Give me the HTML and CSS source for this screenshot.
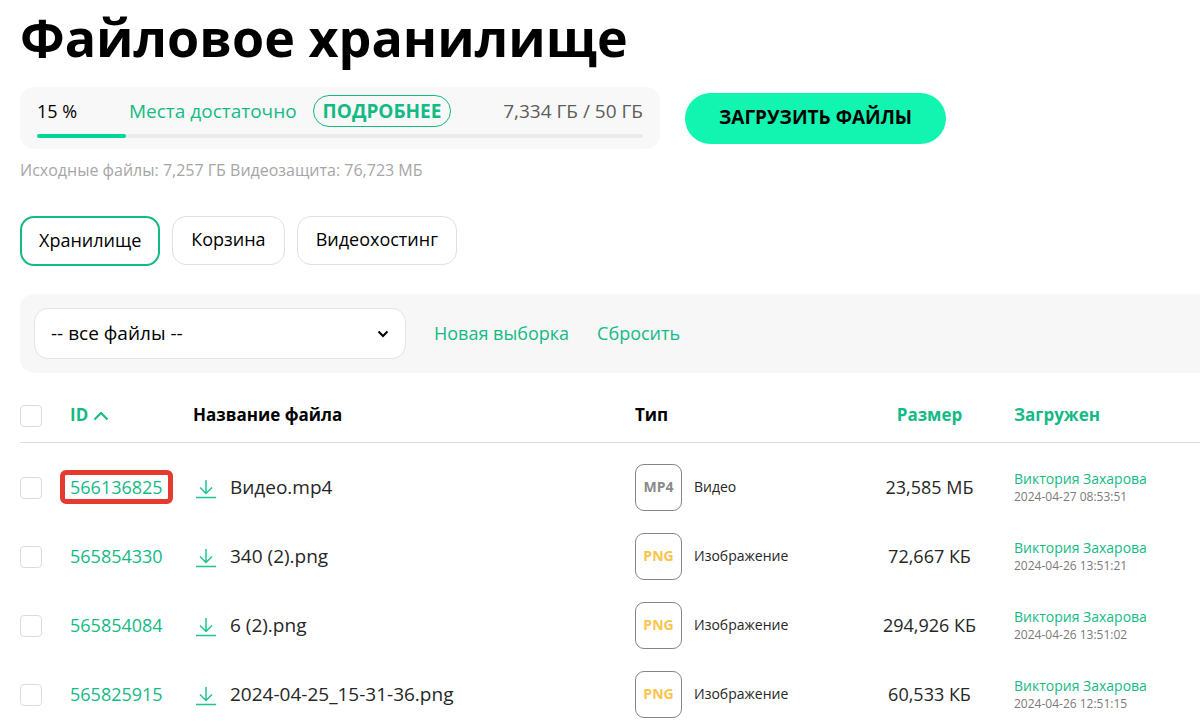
FILE: index.html
```html
<!DOCTYPE html>
<html lang="ru">
<head>
<meta charset="utf-8">
<meta name="viewport" content="width=device-width, initial-scale=1">
<title>Файловое хранилище</title>
<link rel="stylesheet" href="styles.css">
</head>
<body>
<svg class="sprite" aria-hidden="true">
  <symbol id="download" viewBox="0 0 20 20"><path d="M10 1v13M4 8.500l6 6 6-6M0 18.500h20"/></symbol>
</svg>
<main class="page">
  <h1 class="title">Файловое хранилище</h1>
  <section class="summary">
    <div class="quota">
      <div class="quota-line">
        <span class="quota-percent">15 %</span>
        <span class="quota-state">Места достаточно</span>
        <button class="more" type="button">ПОДРОБНЕЕ</button>
        <span class="quota-size">7,334 ГБ / 50 ГБ</span>
      </div>
      <div class="track"><div class="fill" style="width: 14.7%"></div></div>
    </div>
    <button class="upload" type="button">ЗАГРУЗИТЬ ФАЙЛЫ</button>
  </section>
  <p class="note">Исходные файлы: 7,257 ГБ Видеозащита: 76,723 МБ</p>
  <nav class="tabs">
    <a class="tab tab-active" href="#storage">Хранилище</a>
    <a class="tab" href="#trash">Корзина</a>
    <a class="tab" href="#video">Видеохостинг</a>
  </nav>
  <section class="filter">
    <div class="select-box">
      <select class="select" aria-label="Выборка файлов"><option>-- все файлы --</option></select>
      <svg class="chevron" viewBox="0 0 12 8" aria-hidden="true"><path d="M1.500 1.500L6 6l4.500-4.500"/></svg>
    </div>
    <a class="link" href="#new">Новая выборка</a>
    <a class="link" href="#reset">Сбросить</a>
  </section>
  <table class="files">
    <colgroup><col class="col-check"><col class="col-id"><col><col class="col-type"><col class="col-size"><col class="col-user"></colgroup>
    <thead>
      <tr>
        <th><input class="check" type="checkbox" aria-label="Выбрать все"></th>
        <th><a class="sort" href="#id">ID <svg class="caret" viewBox="0 0 16 10" aria-hidden="true"><path d="M1.500 8.500L8 2l6.500 6.500"/></svg></a></th>
        <th>Название файла</th>
        <th>Тип</th>
        <th class="size"><a class="sort" href="#size">Размер</a></th>
        <th><a class="sort" href="#date">Загружен</a></th>
      </tr>
    </thead>
    <tbody>
      <tr>
        <td><input class="check" type="checkbox" aria-label="Выбрать Видео.mp4"></td>
        <td><a class="link marked" href="#566136825">566136825</a></td>
        <td><div class="name"><a class="get" href="#get1" aria-label="Скачать"><svg class="get-icon"><use href="#download"/></svg></a>Видео.mp4</div></td>
        <td><div class="type"><span class="badge">MP4</span>Видео</div></td>
        <td class="size">23,585 МБ</td>
        <td><a class="user" href="#user">Виктория Захарова</a><time class="date">2024-04-27 08:53:51</time></td>
      </tr>
      <tr>
        <td><input class="check" type="checkbox" aria-label="Выбрать 340 (2).png"></td>
        <td><a class="link" href="#565854330">565854330</a></td>
        <td><div class="name"><a class="get" href="#get2" aria-label="Скачать"><svg class="get-icon"><use href="#download"/></svg></a>340 (2).png</div></td>
        <td><div class="type"><span class="badge badge-image">PNG</span>Изображение</div></td>
        <td class="size">72,667 КБ</td>
        <td><a class="user" href="#user">Виктория Захарова</a><time class="date">2024-04-26 13:51:21</time></td>
      </tr>
      <tr>
        <td><input class="check" type="checkbox" aria-label="Выбрать 6 (2).png"></td>
        <td><a class="link" href="#565854084">565854084</a></td>
        <td><div class="name"><a class="get" href="#get3" aria-label="Скачать"><svg class="get-icon"><use href="#download"/></svg></a>6 (2).png</div></td>
        <td><div class="type"><span class="badge badge-image">PNG</span>Изображение</div></td>
        <td class="size">294,926 КБ</td>
        <td><a class="user" href="#user">Виктория Захарова</a><time class="date">2024-04-26 13:51:02</time></td>
      </tr>
      <tr>
        <td><input class="check" type="checkbox" aria-label="Выбрать 2024-04-25_15-31-36.png"></td>
        <td><a class="link" href="#565825915">565825915</a></td>
        <td><div class="name"><a class="get" href="#get4" aria-label="Скачать"><svg class="get-icon"><use href="#download"/></svg></a>2024-04-25_15-31-36.png</div></td>
        <td><div class="type"><span class="badge badge-image">PNG</span>Изображение</div></td>
        <td class="size">60,533 КБ</td>
        <td><a class="user" href="#user">Виктория Захарова</a><time class="date">2024-04-26 12:51:15</time></td>
      </tr>
    </tbody>
  </table>
</main>
</body>
</html>
```
FILE: styles.css
```css
* { box-sizing: border-box; }
body { margin: 0; background: #fff; color: #000; font: 18px/24px "Open Sans", "Noto Sans", sans-serif; }
button, select { font-family: inherit; }
a { color: #14ba85; text-decoration: none; }
.sprite { display: none; }
.page { padding: 2px 0 0 20px; }
.title { margin: 0; font-size: 52px; line-height: 70px; font-weight: 700; white-space: nowrap; }
.summary { display: flex; align-items: center; gap: 25px; margin-top: 15px; }
.quota { width: 640px; padding: 8px 17px 11px; border-radius: 14px; background: #f8f8f8; }
.quota-line { display: flex; align-items: center; height: 32px; font-size: 19px; white-space: nowrap; }
.quota-percent { width: 92px; font-size: 18px; }
.quota-state { margin-right: 16px; color: #14ba85; }
.more { height: 32px; padding: 0 9px; border: 1px solid #14ba85; border-radius: 16px; background: transparent; color: #14ba85; font-size: 19px; line-height: 24px; font-weight: 700; }
.quota-size { margin-left: auto; color: #5c5c5c; }
.track { height: 4px; margin-top: 7px; border-radius: 2px; background: #ebebeb; }
.fill { height: 4px; border-radius: 2px; background: #00d696; }
.upload { height: 51px; padding: 0 34px 2px; border: 0; border-radius: 26px; background: #12f5b1; color: #000; font-size: 19px; font-weight: 700; white-space: nowrap; }
.note { margin: 9px 0 0; color: #a6a6a6; font-size: 16px; line-height: 24px; }
.tabs { display: flex; align-items: flex-start; gap: 12px; margin-top: 34px; }
.tab { padding: 11px 18px 13px; border: 1px solid #e0e0e0; border-radius: 14px; color: #000; line-height: 23px; }
.tab-active { padding: 11px 17px 12px; border: 2px solid #14ba85; }
.filter { display: flex; align-items: center; gap: 28px; margin-top: 28px; padding: 14px; border-radius: 14px 0 0 14px; background: #f7f7f7; }
.select-box { display: grid; align-items: center; width: 372px; }
.select { grid-area: 1 / 1; width: 100%; height: 51px; padding: 0 16px 2px; border: 1px solid #e3e3e3; border-radius: 14px; background: #fff; color: #000; font-size: 19px; appearance: none; }
.chevron { grid-area: 1 / 1; justify-self: end; width: 12px; height: 8px; margin-right: 17px; pointer-events: none; }
.chevron path { fill: none; stroke: #000; stroke-width: 2; }
.filter .link { padding-bottom: 2px; }
.files { width: 100%; margin-top: 16px; border-collapse: collapse; table-layout: fixed; }
.col-check { width: 50px; }
.col-id { width: 123px; }
.col-type { width: 210px; }
.col-size { width: 169px; }
.col-user { width: 186px; }
.files th, .files td { padding: 0; text-align: left; vertical-align: middle; white-space: nowrap; }
.files th { height: 53px; border-bottom: 1px solid #dcdcdc; font-size: 17px; font-weight: 700; }
.files td { height: 69px; color: #262626; }
.files tbody::before { content: ""; display: block; height: 10px; }
.files .size { text-align: center; }
.check { display: block; width: 22px; height: 22px; margin: 2px 0 0; border: 1px solid #dcdcdc; border-radius: 4px; background: #fff; appearance: none; }
.check:checked { background: #14ba85; }
.caret { width: 16px; height: 10px; }
.caret path { fill: none; stroke: #14ba85; stroke-width: 2; }
.marked { display: inline-block; margin-left: -10px; padding: 0 5px; border: 5px solid #e53a30; border-radius: 6px; }
.name, .type { display: flex; align-items: center; }
.name { font-size: 19px; }
.get { display: flex; margin: 3px 14px 0 3px; }
.get-icon { width: 20px; height: 20px; fill: none; stroke: #1fc493; stroke-width: 1.5px; }
.type { gap: 12px; font-size: 14px; }
.badge { display: flex; align-items: center; justify-content: center; width: 47px; height: 47px; border: 1px solid #858585; border-radius: 9px; color: #8a8a8a; font-weight: 700; }
.badge-image { color: #fcc44c; }
.user, .date { display: block; }
.user { font-size: 14px; line-height: 20px; }
.date { color: #7a7a7a; font-size: 12px; line-height: 16px; }
```
